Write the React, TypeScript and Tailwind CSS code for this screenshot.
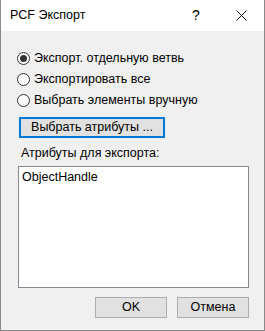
import React from "react";

function Radio({ checked, label }: { checked?: boolean; label: string }) {
  return (
    <div className="flex h-[21px] items-center">
      <div className="flex h-[13px] w-[13px] items-center justify-center rounded-full border border-[#333333] bg-white">
        {checked && <div className="h-[7px] w-[7px] rounded-full bg-[#333333]" />}
      </div>
      <span className="ml-[4px]">{label}</span>
    </div>
  );
}

export default function App() {
  return (
    <div
      className="flex h-[331px] w-[265px] flex-col border-x border-b border-[#8a8a8a] bg-[#f0f0f0] text-[12.5px] leading-[15px] text-black"
      style={{ fontFamily: '"Liberation Sans", Arial, sans-serif' }}
    >
      <div className="flex h-[31px] items-center bg-white">
        <span className="ml-[9px] flex-1">PCF Экспорт</span>
        <div className="flex h-full w-[46px] items-center justify-center pl-[2px] text-[14px] font-light">?</div>
        <div className="flex h-full w-[46px] items-center justify-center">
          <svg width="11" height="11" viewBox="0 0 11 11">
            <path d="M0.5 0.5 L10.5 10.5 M10.5 0.5 L0.5 10.5" stroke="#111" strokeWidth="1" fill="none" />
          </svg>
        </div>
      </div>
      <div className="flex flex-1 flex-col pl-[16px] pt-[17px]">
        <Radio checked label="Экспорт. отдельную ветвь" />
        <Radio label="Экспортировать все" />
        <Radio label="Выбрать элементы вручную" />
        <div className="ml-[2px] mt-[6px] flex h-[21px] w-[146px] items-center justify-center border-2 border-[#0078d7] bg-[#e1e1e1]">
          Выбрать атрибуты ...
        </div>
        <div className="ml-[4px] mt-[8px] h-[15px]">Атрибуты для экспорта:</div>
        <div className="ml-[1px] mt-[5px] h-[122px] w-[231px] border border-[#828790] bg-white px-[3px] pt-[3px]">
          ObjectHandle
        </div>
        <div className="mt-[9px] flex w-[232px] justify-end gap-[10px]">
          <div className="flex h-[21px] w-[72px] items-center justify-center border border-[#adadad] bg-[#e1e1e1]">OK</div>
          <div className="flex h-[21px] w-[72px] items-center justify-center border border-[#adadad] bg-[#e1e1e1]">Отмена</div>
        </div>
      </div>
    </div>
  );
}
